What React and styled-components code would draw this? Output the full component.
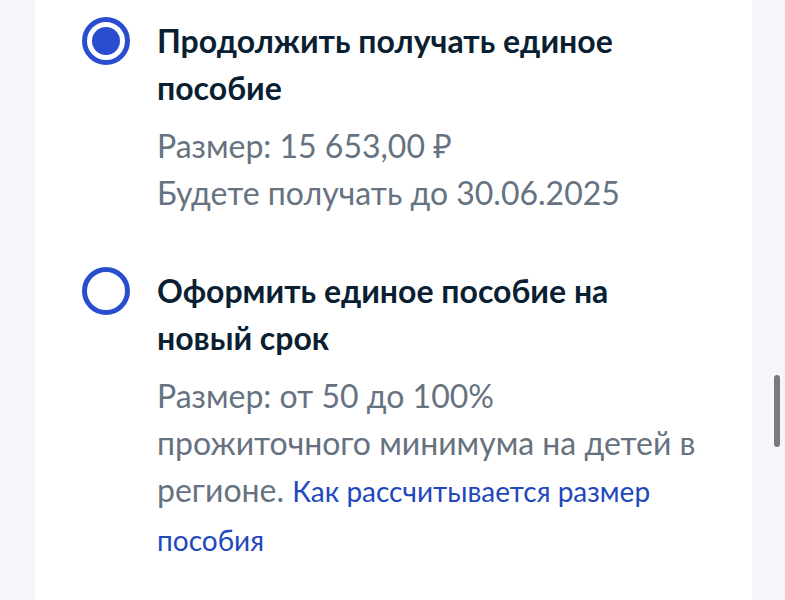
import React from 'react';
import styled, { createGlobalStyle } from 'styled-components';

const GlobalStyle = createGlobalStyle`
  html, body {
    margin: 0;
    padding: 0;
    background: #f4f6fa;
    font-family: Lato, "Noto Sans", sans-serif;
    overflow: hidden;
  }
`;

const Page = styled.div`
  position: relative;
  height: 600px;
  padding: 0 33px 0 35px;
`;

const Card = styled.div`
  background: #ffffff;
  height: 100%;
  padding: 17px 47px 0 47px;
  box-sizing: border-box;
  display: flex;
  flex-direction: column;
  gap: 51px;
`;

const Option = styled.label`
  display: flex;
  align-items: flex-start;
  gap: 27px;
  cursor: pointer;
`;

const Radio = styled.span`
  flex: 0 0 auto;
  width: 48px;
  height: 48px;
  box-sizing: border-box;
  border-radius: 50%;
  border: 5px solid #2a4dcf;
  display: flex;
  align-items: center;
  justify-content: center;

  &::after {
    content: '';
    width: 28px;
    height: 28px;
    border-radius: 50%;
    background: #2a4dcf;
    display: ${(p) => (p.$checked ? 'block' : 'none')};
  }
`;

const Body = styled.div`
  flex: 1;
`;

const Title = styled.div`
  font-size: 32px;
  font-weight: 700;
  line-height: 47px;
  color: #0b1f33;
`;

const Desc = styled.div`
  margin-top: 11px;
  font-size: 32px;
  line-height: 47px;
  color: #66727f;
`;

const Link = styled.a`
  color: #1f48bd;
  font-size: 28px;
  text-decoration: none;
`;

const Scrollbar = styled.div`
  position: absolute;
  right: 5px;
  top: 375px;
  width: 6px;
  height: 72px;
  border-radius: 3px;
  background: #7a7a7c;
`;

const options = [
  {
    title: 'Продолжить получать единое пособие',
    checked: true,
    desc: (
      <>
        Размер: 15 653,00 ₽
        <br />
        Будете получать до 30.06.2025
      </>
    ),
  },
  {
    title: 'Оформить единое пособие на новый срок',
    checked: false,
    desc: (
      <>
        Размер: от 50 до 100%
        <br />
        прожиточного минимума на детей в регионе.{' '}
        <Link href="#">Как рассчитывается размер пособия</Link>
      </>
    ),
  },
];

export default function App() {
  return (
    <>
      <GlobalStyle />
      <Page>
        <Card>
          {options.map((o) => (
            <Option key={o.title}>
              <Radio $checked={o.checked} />
              <Body>
                <Title>{o.title}</Title>
                <Desc>{o.desc}</Desc>
              </Body>
            </Option>
          ))}
        </Card>
        <Scrollbar />
      </Page>
    </>
  );
}
